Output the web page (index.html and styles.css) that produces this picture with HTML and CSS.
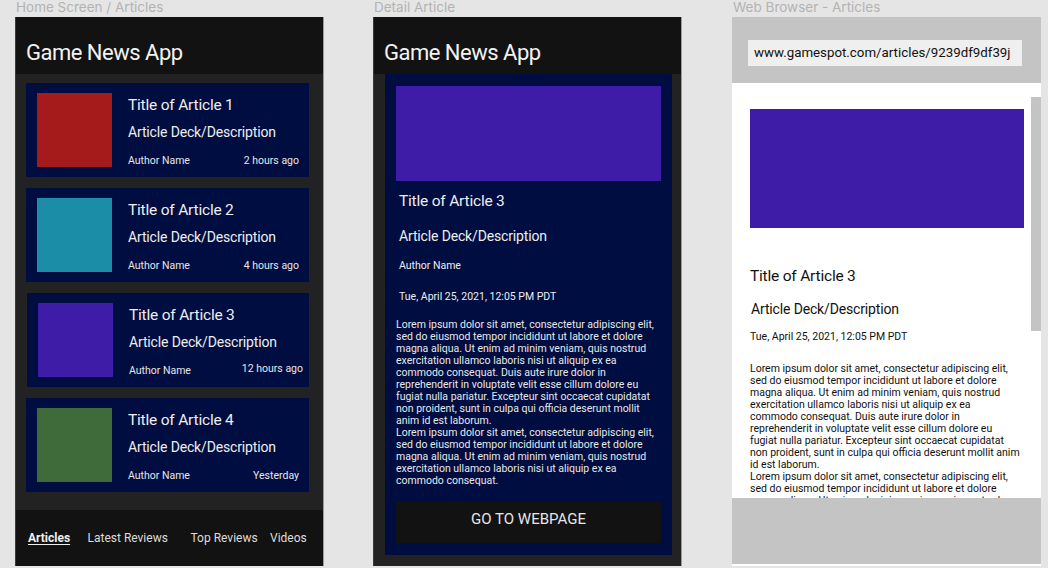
FILE: index.html
```html
<!DOCTYPE html>
<html lang="en">
<head>
<meta charset="utf-8">
<title>Game News App - Wireframes</title>
<link rel="stylesheet" href="styles.css">
</head>
<body>
<div class="canvas">

  <section class="col">
    <div class="frame-label">Home Screen / Articles</div>
    <div class="frame frame-app">
      <header class="app-header">Game News App</header>
      <div class="card-list">
        <article class="card">
          <div class="thumb thumb-red"></div>
          <div class="card-text">
            <div class="card-title">Title of Article 1</div>
            <div class="card-deck">Article Deck/Description</div>
            <div class="card-meta"><span>Author Name</span><span>2 hours ago</span></div>
          </div>
        </article>
        <article class="card">
          <div class="thumb thumb-teal"></div>
          <div class="card-text">
            <div class="card-title">Title of Article 2</div>
            <div class="card-deck">Article Deck/Description</div>
            <div class="card-meta"><span>Author Name</span><span>4 hours ago</span></div>
          </div>
        </article>
        <article class="card card-shifted">
          <div class="thumb thumb-purple"></div>
          <div class="card-text">
            <div class="card-title">Title of Article 3</div>
            <div class="card-deck">Article Deck/Description</div>
            <div class="card-meta"><span>Author Name</span><span class="meta-raised">12 hours ago</span></div>
          </div>
        </article>
        <article class="card">
          <div class="thumb thumb-green"></div>
          <div class="card-text">
            <div class="card-title">Title of Article 4</div>
            <div class="card-deck">Article Deck/Description</div>
            <div class="card-meta"><span>Author Name</span><span>Yesterday</span></div>
          </div>
        </article>
      </div>
      <nav class="bottom-nav">
        <span class="nav-item active">Articles</span>
        <span class="nav-item">Latest Reviews</span>
        <span class="nav-item">Top Reviews</span>
        <span class="nav-item">Videos</span>
      </nav>
    </div>
  </section>

  <section class="col">
    <div class="frame-label">Detail Article</div>
    <div class="frame frame-app">
      <header class="app-header">Game News App</header>
      <div class="detail-body">
        <div class="detail-panel">
          <div class="hero hero-dark"></div>
          <div class="d-title">Title of Article 3</div>
          <div class="d-deck">Article Deck/Description</div>
          <div class="d-author">Author Name</div>
          <div class="d-date">Tue, April 25, 2021, 12:05 PM PDT</div>
          <p class="d-body">Lorem ipsum dolor sit amet, consectetur adipiscing elit,<br>sed do eiusmod tempor incididunt ut labore et dolore<br>magna aliqua. Ut enim ad minim veniam, quis nostrud<br>exercitation ullamco laboris nisi ut aliquip ex ea<br>commodo consequat. Duis aute irure dolor in<br>reprehenderit in voluptate velit esse cillum dolore eu<br>fugiat nulla pariatur. Excepteur sint occaecat cupidatat<br>non proident, sunt in culpa qui officia deserunt mollit<br>anim id est laborum.<br>Lorem ipsum dolor sit amet, consectetur adipiscing elit,<br>sed do eiusmod tempor incididunt ut labore et dolore<br>magna aliqua. Ut enim ad minim veniam, quis nostrud<br>exercitation ullamco laboris nisi ut aliquip ex ea<br>commodo consequat.</p>
          <button class="web-btn" type="button">GO TO WEBPAGE</button>
        </div>
      </div>
    </div>
  </section>

  <section class="col col-browser">
    <div class="frame-label">Web Browser - Articles</div>
    <div class="frame frame-browser">
      <div class="browser-top">
        <div class="url-box">www.gamespot.com/articles/9239df9df39j</div>
      </div>
      <div class="browser-view">
        <div class="hero hero-light"></div>
        <div class="w-title">Title of Article 3</div>
        <div class="w-deck">Article Deck/Description</div>
        <div class="w-date">Tue, April 25, 2021, 12:05 PM PDT</div>
        <p class="w-body">Lorem ipsum dolor sit amet, consectetur adipiscing elit,<br>sed do eiusmod tempor incididunt ut labore et dolore<br>magna aliqua. Ut enim ad minim veniam, quis nostrud<br>exercitation ullamco laboris nisi ut aliquip ex ea<br>commodo consequat. Duis aute irure dolor in<br>reprehenderit in voluptate velit esse cillum dolore eu<br>fugiat nulla pariatur. Excepteur sint occaecat cupidatat<br>non proident, sunt in culpa qui officia deserunt mollit anim<br>id est laborum.<br>Lorem ipsum dolor sit amet, consectetur adipiscing elit,<br>sed do eiusmod tempor incididunt ut labore et dolore<br>magna aliqua. Ut enim ad minim veniam, quis nostrud<br>exercitation ullamco laboris nisi ut aliquip ex ea</p>
        <div class="scrollbar"></div>
      </div>
      <div class="browser-bottom"></div>
    </div>
  </section>

</div>
</body>
</html>
```

FILE: styles.css
```css
* { box-sizing: border-box; }

html, body {
  margin: 0;
  padding: 0;
}

body {
  background: #e5e5e5;
  font-family: Roboto, "Liberation Sans", Arial, sans-serif;
  width: 1048px;
  height: 568px;
  overflow: hidden;
}

.canvas {
  display: flex;
  align-items: flex-start;
  padding-left: 15px;
  column-gap: 49px;
}

.col {
  width: 309px;
  flex: none;
  display: flex;
  flex-direction: column;
}

.col-browser { margin-left: 1px; }

.frame-label {
  height: 17px;
  padding-left: 1px;
  font-family: Inter, "Noto Sans", sans-serif;
  font-size: 13.5px;
  line-height: 14px;
  color: #b3b3b3;
  white-space: nowrap;
}

.frame {
  width: 309px;
  height: 549px;
  display: flex;
  flex-direction: column;
  overflow: hidden;
}

.frame-app {
  background: #222222;
  border-left: 1px solid #3a3a3a;
  border-right: 1px solid #9a9a9a;
}

/* ---------- header ---------- */
.app-header {
  height: 57px;
  flex: none;
  background: #121212;
  color: #f2f2f2;
  font-size: 22px;
  letter-spacing: -0.5px;
  line-height: 26px;
  padding: 23px 0 0 10px;
  white-space: nowrap;
}

/* ---------- list ---------- */
.card-list {
  flex: 1;
  display: flex;
  flex-direction: column;
  gap: 11px;
  padding: 9px 14px 0 10px;
}

.card {
  height: 94px;
  background: #000d40;
  display: flex;
  gap: 16px;
  padding: 10px 10px 0 11px;
}

.card-shifted {
  margin-left: 1px;
  padding-left: 11px;
  padding-right: 6px;
}

.thumb {
  width: 75px;
  height: 74px;
  flex: none;
}

.thumb-red { background: #a51b1b; }
.thumb-teal { background: #1b8da7; }
.thumb-purple { background: #3f1ca7; }
.thumb-green { background: #3e6b39; }

.card-text {
  flex: 1;
  display: flex;
  flex-direction: column;
  padding-top: 2px;
  color: #eeeeee;
  min-width: 0;
}

.card-title {
  font-size: 15.5px;
  letter-spacing: -0.2px;
  line-height: 20px;
  white-space: nowrap;
}

.card-deck {
  margin-top: 8px;
  font-size: 14px;
  letter-spacing: -0.15px;
  line-height: 18px;
  white-space: nowrap;
}

.card-meta {
  margin-top: 13px;
  display: flex;
  justify-content: space-between;
  font-size: 10.5px;
  line-height: 14px;
  color: #e6e6e6;
  white-space: nowrap;
}

.meta-raised { margin-top: -2px; }

/* ---------- nav ---------- */
.bottom-nav {
  height: 56px;
  flex: none;
  background: #121212;
  display: grid;
  grid-template-columns: 59.5px 103px 79.5px 1fr;
  align-items: center;
  padding-left: 12px;
  padding-bottom: 1px;
  font-size: 12px;
  color: #dddddd;
  white-space: nowrap;
}

.nav-item.active {
  font-weight: 700;
  text-decoration: underline;
  text-underline-offset: 2px;
  color: #f0f0f0;
}

/* ---------- detail ---------- */
.detail-body {
  flex: 1;
  padding: 0 9px 11px 11px;
  display: flex;
  min-height: 0;
}

.detail-panel {
  flex: 1;
  min-width: 0;
  background: #000d40;
  padding: 12px 11px 0 11px;
  display: flex;
  flex-direction: column;
  color: #eeeeee;
}

.hero {
  flex: none;
}

.hero-dark {
  height: 95px;
  background: #3f1ca7;
}

.d-title {
  margin-top: 9.5px;
  padding-left: 3px;
  font-size: 15.5px;
  letter-spacing: -0.2px;
  line-height: 20px;
}

.d-deck {
  margin-top: 16.5px;
  padding-left: 3px;
  font-size: 14px;
  letter-spacing: -0.15px;
  line-height: 18px;
}

.d-author {
  margin-top: 14px;
  padding-left: 3px;
  font-size: 10.5px;
  line-height: 14px;
}

.d-date {
  margin-top: 16.5px;
  padding-left: 3px;
  font-size: 10.5px;
  line-height: 14px;
}

.d-body {
  margin: 15px 0 0 0;
  font-size: 10.5px;
  line-height: 12px;
  color: #e8e8e8;
  white-space: nowrap;
}

.web-btn {
  margin-top: 15px;
  height: 41px;
  flex: none;
  border: 0;
  background: #121212;
  color: #e6e6e6;
  font-family: inherit;
  font-size: 15px;
  padding: 0 0 7px 0;
  width: 100%;
}

/* ---------- browser ---------- */
.frame-browser {
  background: #ffffff;
}

.browser-top {
  height: 66px;
  flex: none;
  background: #c4c4c4;
  padding: 23px 19px 0 16px;
}

.url-box {
  height: 26px;
  background: #efefef;
  padding-left: 6px;
  font-size: 13.3px;
  line-height: 26px;
  color: #111111;
  white-space: nowrap;
  overflow: hidden;
}

.browser-view {
  position: relative;
  height: 415px;
  flex: none;
  overflow: hidden;
  background: #ffffff;
  padding: 26px 17px 0 18px;
  color: #111111;
}

.hero-light {
  height: 119px;
  background: #3f1ca7;
}

.w-title {
  margin-top: 37.5px;
  font-size: 15.5px;
  letter-spacing: -0.2px;
  line-height: 20px;
}

.w-deck {
  margin-top: 14px;
  padding-left: 1px;
  font-size: 14px;
  letter-spacing: -0.15px;
  line-height: 18px;
}

.w-date {
  margin-top: 12px;
  font-size: 10.5px;
  line-height: 14px;
}

.w-body {
  margin: 19.5px 0 0 0;
  font-size: 10.5px;
  line-height: 12px;
  white-space: nowrap;
}

.scrollbar {
  position: absolute;
  top: 14px;
  right: 0;
  width: 10px;
  height: 234px;
  background: #c4c4c4;
}

.browser-bottom {
  height: 66px;
  flex: none;
  background: #c4c4c4;
}
```
